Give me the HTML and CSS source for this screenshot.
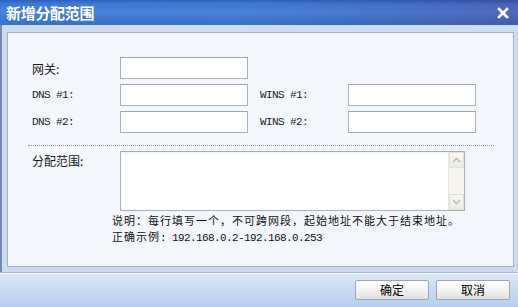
FILE: index.html
```html
<!DOCTYPE html>
<html>
<head>
<meta charset="utf-8">
<link rel="stylesheet" href="styles.css">
</head>
<body>
<div class="window">
  <div class="titlebar">
    <span class="title">新增分配范围</span>
    <svg class="close" width="12" height="12" viewBox="0 0 12 12"><path d="M2 2 L10 10 M10 2 L2 10" stroke="#fff" stroke-width="2.6" stroke-linecap="square"/></svg>
  </div>
  <div class="frame">
    <div class="panel">
      <div class="grid">
        <label class="lbl">网关:</label>
        <input class="field" type="text">
        <span></span><span></span>
        <label class="lbl mono">DNS #1:</label>
        <input class="field" type="text">
        <label class="lbl mono">WINS #1:</label>
        <input class="field" type="text">
        <label class="lbl mono">DNS #2:</label>
        <input class="field" type="text">
        <label class="lbl mono">WINS #2:</label>
        <input class="field" type="text">
      </div>
      <div class="sep"></div>
      <div class="range">
        <label class="lbl rlbl">分配范围:</label>
        <div class="area">
          <div class="area-text"></div>
          <div class="sb">
            <div class="sb-btn"><svg width="9" height="6" viewBox="0 0 9 6"><path d="M1 5 L4.5 1.5 L8 5" fill="none" stroke="#b8bcae" stroke-width="1.3"/></svg></div>
            <div class="sb-track"></div>
            <div class="sb-btn"><svg width="9" height="6" viewBox="0 0 9 6"><path d="M1 1 L4.5 4.5 L8 1" fill="none" stroke="#b8bcae" stroke-width="1.3"/></svg></div>
          </div>
        </div>
      </div>
      <div class="note">
        <div class="note-line cjk">说明：每行填写一个，不可跨网段，起始地址不能大于结束地址。</div>
        <div class="note-line"><span class="cjk">正确示例</span><span class="mono">: 192.168.0.2-192.168.0.253</span></div>
      </div>
    </div>
  </div>
  <div class="footer">
    <button class="btn">确定</button>
    <button class="btn">取消</button>
  </div>
</div>
</body>
</html>
```

FILE: styles.css
```css
* { box-sizing: border-box; }
html, body { margin: 0; padding: 0; }
body {
  width: 518px;
  height: 307px;
  overflow: hidden;
  font-family: "Noto Sans CJK SC", "Liberation Sans", sans-serif;
  font-size: 12px;
  color: #111;
  background: #cbdaef;
}
.window {
  width: 518px;
  height: 307px;
  display: flex;
  flex-direction: column;
  border-left: 2px solid #6f8bb6;
}
.titlebar {
  height: 25px;
  flex: none;
  display: flex;
  align-items: center;
  justify-content: space-between;
  padding: 0 9px 0 4px;
  background:
    linear-gradient(to bottom, rgba(20,50,120,0.35) 0px, rgba(20,50,120,0) 4px, rgba(255,255,255,0.06) 12px, rgba(0,20,80,0.1) 25px),
    linear-gradient(to right, #3a7ad6 0%, #3e7bd4 45%, #3f6fc6 75%, #4a5fb6 100%);
  margin-left: -2px;
}
.title {
  color: #fff;
  font-weight: bold;
  font-size: 15px;
  line-height: 25px;
  letter-spacing: -0.3px;
  padding-left: 2px;
}
.close { display: block; margin-top: 1px; }
.frame {
  flex: none;
  height: 242px;
  padding: 7px 4px 0 5px;
  background: #cddcf0;
}
.panel {
  height: 235px;
  border: 1px solid #a3b2c6;
  background: #f3f7fc;
  padding: 24px 0 0 0;
}
.grid {
  display: grid;
  grid-template-columns: 88px 128px 12px 88px 128px;
  grid-auto-rows: 22px;
  row-gap: 5px;
  padding-left: 24px;
}
.grid > :nth-child(4n+3) { grid-column: 4; }
.grid > :nth-child(4n+4) { grid-column: 5; }
.lbl {
  display: flex;
  align-items: center;
  font-size: 12px;
  color: #1a1a1a;
}
.mono {
  font-family: "Liberation Mono", "DejaVu Sans Mono", monospace;
  font-size: 11px;
  letter-spacing: -0.6px;
}
.lbl.mono { font-size: 11px; }
.field {
  width: 128px;
  height: 22px;
  margin: 0;
  border: 1px solid #abb1ba;
  border-top-color: #9fa5ae;
  background: #fff;
  padding: 0 3px;
  outline: none;
}
.sep {
  margin: 12px 19px 0 20px;
  border-top: 1px dotted #9aa0a8;
  height: 0;
}
.range {
  display: flex;
  margin-top: 5px;
  padding-left: 24px;
}
.rlbl {
  width: 88px;
  align-items: flex-start;
  padding-top: 1px;
  height: 16px;
}
.area {
  width: 345px;
  height: 60px;
  border: 1px solid #abb1ba;
  background: #fff;
  display: flex;
  box-shadow: inset 0 2px 3px rgba(0,0,0,0.06);
}
.area-text { flex: 1; }
.sb {
  width: 16px;
  display: flex;
  flex-direction: column;
  background: #f7f6ee;
  border-left: 1px solid #eceae0;
}
.sb-btn {
  height: 16px;
  display: flex;
  align-items: center;
  justify-content: center;
  background: linear-gradient(#f8f8f2, #ecebe0);
  border: 1px solid #e2e1d6;
}
.sb-track { flex: 1; }
.note {
  margin: 1px 0 0 104px;
  color: #111;
}
.note-line {
  height: 16px;
  line-height: 16px;
  font-size: 11px;
}
.note .cjk {
  font-size: 11px;
  letter-spacing: 1px;
}
.note .mono { font-size: 11px; letter-spacing: -0.6px; }
.footer {
  flex: 1;
  display: flex;
  justify-content: flex-end;
  align-items: flex-start;
  gap: 7px;
  padding: 7px 8px 0 0;
  border-top: 1px solid #a9b7c8;
  margin-top: 5px;
  box-shadow: inset 0 1px 0 #f2f6fb;
  background: linear-gradient(to bottom, #dae7f7 0%, #c9dbf2 50%, #b6cdee 100%);
  margin-left: -2px;
}
.btn {
  width: 74px;
  height: 20px;
  margin: 0;
  padding: 0;
  font-family: "Noto Sans CJK SC", sans-serif;
  font-size: 12px;
  color: #000;
  border: 1px solid #9ea6b0;
  border-radius: 2px;
  background: linear-gradient(to bottom, #ffffff 0%, #f4f4f4 45%, #e2e2e2 100%);
  line-height: 18px;
}
```
